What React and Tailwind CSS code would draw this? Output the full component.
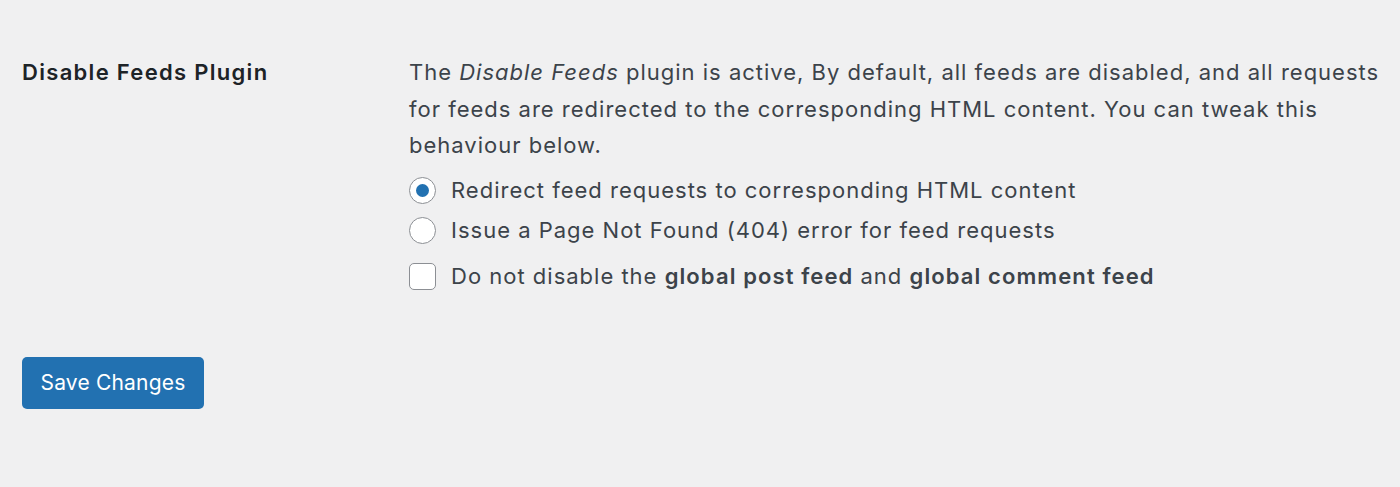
export default function App() {
  const font = { fontFamily: 'Inter, "Noto Sans", sans-serif' };
  return (
    <div className="min-h-[487px] w-[1400px] bg-[#f0f0f1] text-[#3c434a]" style={font}>
      <div className="flex pl-[22px] pt-[54px]">
        <div className="w-[387px] shrink-0 text-[22px] leading-[36px] font-semibold tracking-[1.3px] text-[#1d2327]">
          Disable Feeds Plugin
        </div>
        <div className="w-[985px] text-[22px] leading-[36.5px] tracking-[1px]">
          <p>
            The <em>Disable Feeds</em> plugin is active, By default, all feeds are disabled, and all requests for feeds are redirected to the corresponding HTML content. You can tweak this behaviour below.
          </p>
          <div className="mt-[7px] flex flex-col">
            <label className="flex h-[40px] items-center gap-[15px]">
              <span className="flex h-[27px] w-[27px] shrink-0 items-center justify-center rounded-full border-[1.5px] border-[#8c8f94] bg-white">
                <span className="h-[13px] w-[13px] rounded-full bg-[#2271b1]" />
              </span>
              <span>Redirect feed requests to corresponding HTML content</span>
            </label>
            <label className="flex h-[40px] items-center gap-[15px]">
              <span className="h-[27px] w-[27px] shrink-0 rounded-full border-[1.5px] border-[#8c8f94] bg-white" />
              <span>Issue a Page Not Found (404) error for feed requests</span>
            </label>
            <label className="mt-[6px] flex h-[40px] items-center gap-[15px]">
              <span className="h-[27px] w-[27px] shrink-0 rounded-[5px] border-[1.5px] border-[#8c8f94] bg-white" />
              <span>
                Do not disable the <strong className="font-semibold tracking-[1.1px]">global post feed</strong> and{" "}
                <strong className="font-semibold tracking-[1.1px]">global comment feed</strong>
              </span>
            </label>
          </div>
        </div>
      </div>
      <div className="pl-[22px] pt-[60px]">
        <button className="flex h-[52px] w-[182px] items-center justify-center rounded-[5px] bg-[#2271b1] text-[21px] tracking-[0.2px] text-white">
          Save Changes
        </button>
      </div>
    </div>
  );
}
